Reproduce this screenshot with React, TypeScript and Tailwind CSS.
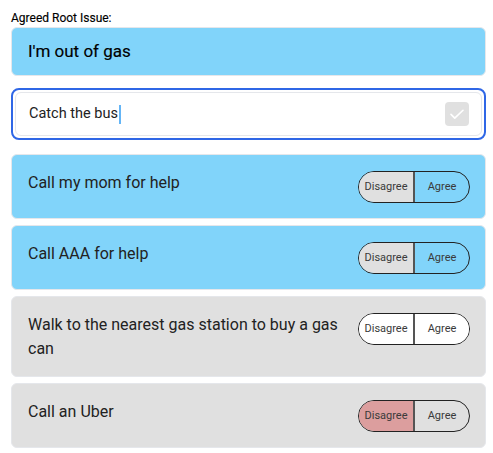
import React from 'react';

type Solution = {
  id: number;
  text: string;
  agreed: boolean;
  vote: 'none' | 'neutral' | 'disagree';
};

const SOLUTIONS: Solution[] = [
  { id: 1, text: 'Call my mom for help', agreed: true, vote: 'neutral' },
  { id: 2, text: 'Call AAA for help', agreed: true, vote: 'neutral' },
  { id: 3, text: 'Walk to the nearest gas station to buy a gas can', agreed: false, vote: 'none' },
  { id: 4, text: 'Call an Uber', agreed: false, vote: 'disagree' },
];

const VoteToggle: React.FC<{ vote: Solution['vote'] }> = ({ vote }) => {
  const disagreeBg =
    vote === 'disagree' ? 'bg-[#dc9e9e]' : vote === 'neutral' ? 'bg-[#e0e0e0]' : 'bg-white';
  const agreeBg = vote === 'none' ? 'bg-white' : 'bg-transparent';
  return (
    <div className="mt-[1px] flex h-8 w-[112px] shrink-0 overflow-hidden rounded-full border border-[#222] text-[11px] text-[#3a3a3a]">
      <button className={`flex-1 border-r-2 border-[#555] ${disagreeBg}`}>Disagree</button>
      <button className={`flex-1 ${agreeBg}`}>Agree</button>
    </div>
  );
};

const App: React.FC = () => {
  return (
    <div
      className="min-h-screen bg-white pl-[11px] pr-[7px] pt-[10px]"
      style={{ fontFamily: 'Roboto, "Liberation Sans", sans-serif' }}
    >
      <div className="mb-[1px] text-xs leading-4 text-black [-webkit-text-stroke:0.15px_black]">
        Agreed Root Issue:
      </div>
      <div className="flex h-[49px] items-center rounded-md border border-gray-200 bg-[#81d4fa] pl-[16px] text-[17px] text-black [-webkit-text-stroke:0.15px_black]">
        I'm out of gas
      </div>

      <div className="mb-[14px] mt-[12px] rounded-lg border-2 border-[#2f67e6] bg-white p-[2px]">
        <div className="flex h-[44px] items-center rounded-md border border-gray-200 pl-[13px] pr-[12px]">
          <span className="flex flex-1 items-center text-[14.5px] text-[#222]">
            Catch the bus
            <span className="ml-[1px] h-[19px] w-[2px] bg-[#64b5f6]" />
          </span>
          <div className="flex h-6 w-6 items-center justify-center rounded bg-[#e0e0e0]">
            <svg width="18" height="18" viewBox="0 0 24 24" fill="none" stroke="white" strokeWidth="2.2" strokeLinecap="round" strokeLinejoin="round">
              <path d="M4 12.5l5 5L20 7" />
            </svg>
          </div>
        </div>
      </div>

      <div className="flex flex-col gap-[6px]">
        {SOLUTIONS.map(s => (
          <div
            key={s.id}
            className={`flex items-start justify-between gap-4 rounded-md border border-gray-200 py-[15px] pl-[16px] pr-[15px] ${
              s.agreed ? 'bg-[#81d4fa]' : 'bg-[#e0e0e0]'
            }`}
          >
            <div className="pt-[1px] text-base leading-6 text-[#222]">{s.text}</div>
            <VoteToggle vote={s.vote} />
          </div>
        ))}
      </div>
    </div>
  );
};

export default App;
